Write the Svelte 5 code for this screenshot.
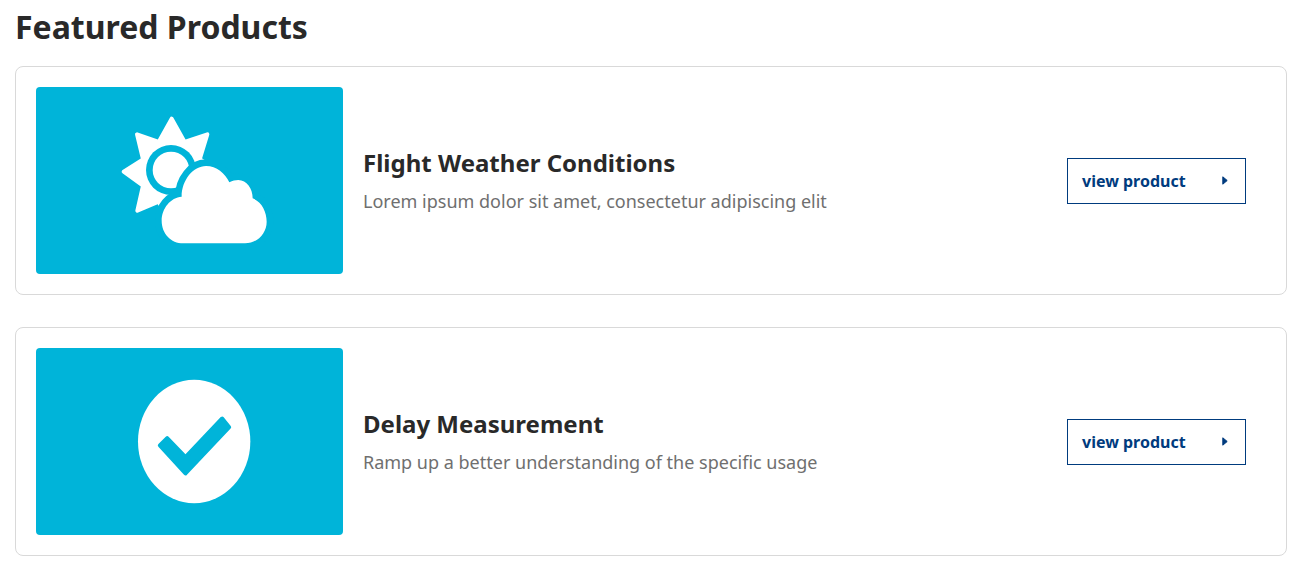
<script>
  const products = [
    { title: 'Flight Weather Conditions', text: 'Lorem ipsum dolor sit amet, consectetur adipiscing elit', icon: 'weather' },
    { title: 'Delay Measurement', text: 'Ramp up a better understanding of the specific usage', icon: 'check' }
  ];
  const cloud = 'M250 430 C212 430 185 400 185 362 C185 325 212 292 245 290 C245 240 280 198 318 198 C350 198 375 220 388 247 C398 242 406 240 415 240 C440 240 458 265 458 295 C485 305 500 335 500 365 C500 400 472 430 435 430 Z';
</script>

<main class="page">
  <h2>Featured Products</h2>
  {#each products as product}
    <article class="card">
      <div class="thumb">
        {#if product.icon === 'weather'}
          <svg width="201" height="161" viewBox="-33 0 603 483">
            <path class="sun" d="M215 56 L254 126 L322 103 L299 178 L360 215 L299 257 L322 330 L254 305 L215 375 L176 305 L112 332 L129 257 L71 215 L129 178 L111 103 L176 126 Z" />
            <circle class="blue" cx="213" cy="210" r="75" />
            <circle class="white" cx="213" cy="210" r="55" />
            <path class="halo" d={cloud} />
            <path class="white" d={cloud} />
          </svg>
        {:else}
          <svg width="160" height="140" viewBox="-31.5 4.5 480 420">
            <ellipse class="white" cx="221" cy="213" rx="168.5" ry="185" />
            <path class="tick" d="M140 203 L118 225 L195 309 L326 170 L305 144 L195 260 Z" />
          </svg>
        {/if}
      </div>
      <div class="info">
        <h3>{product.title}</h3>
        <p>{product.text}</p>
      </div>
      <button type="button">
        <span>view product</span>
        <svg width="6" height="9" viewBox="0 0 6 9"><path d="M0.8 0.8 L5.2 4.5 L0.8 8.2 Z" /></svg>
      </button>
    </article>
  {/each}
</main>

<style>
  :global(body) {
    margin: 0;
    background: #fff;
    font-family: "Noto Sans", "Open Sans", sans-serif;
  }
  .page {
    padding: 0 18px 0 15px;
  }
  h2 {
    margin: 0;
    padding: 5px 0 17px;
    font-size: 32px;
    line-height: 44px;
    font-weight: 700;
    color: #292929;
  }
  .card {
    display: flex;
    align-items: center;
    box-sizing: border-box;
    height: 229px;
    margin-bottom: 32px;
    padding: 20px 40px 20px 20px;
    border: 1px solid #d9d9d9;
    border-radius: 8px;
  }
  .thumb {
    display: flex;
    align-items: center;
    justify-content: center;
    flex: none;
    width: 307px;
    height: 187px;
    border-radius: 4px;
    background: #00b4d9;
  }
  .white { fill: #fff; }
  .blue { fill: #00b4d9; }
  .sun {
    fill: #fff;
    stroke: #fff;
    stroke-width: 12;
    stroke-linejoin: round;
  }
  .halo {
    fill: #00b4d9;
    stroke: #00b4d9;
    stroke-width: 40;
  }
  .tick {
    fill: #00b4d9;
    stroke: #00b4d9;
    stroke-width: 12;
    stroke-linejoin: round;
  }
  .info {
    flex: 1;
    padding: 0 0 2px 20px;
  }
  h3 {
    margin: 0 0 10px;
    font-size: 24px;
    line-height: 33px;
    font-weight: 700;
    color: #292929;
  }
  p {
    margin: 0;
    font-size: 18px;
    line-height: 25px;
    color: #6f6f6f;
  }
  button {
    display: flex;
    align-items: center;
    justify-content: space-between;
    flex: none;
    box-sizing: border-box;
    width: 179px;
    height: 46px;
    padding: 0 17px 0 14px;
    border: 1px solid #003b7e;
    background: #fff;
    color: #003b7e;
    font: 700 16px "Noto Sans", sans-serif;
  }
  button svg {
    fill: #003b7e;
    stroke: #003b7e;
    stroke-linejoin: round;
  }
</style>
